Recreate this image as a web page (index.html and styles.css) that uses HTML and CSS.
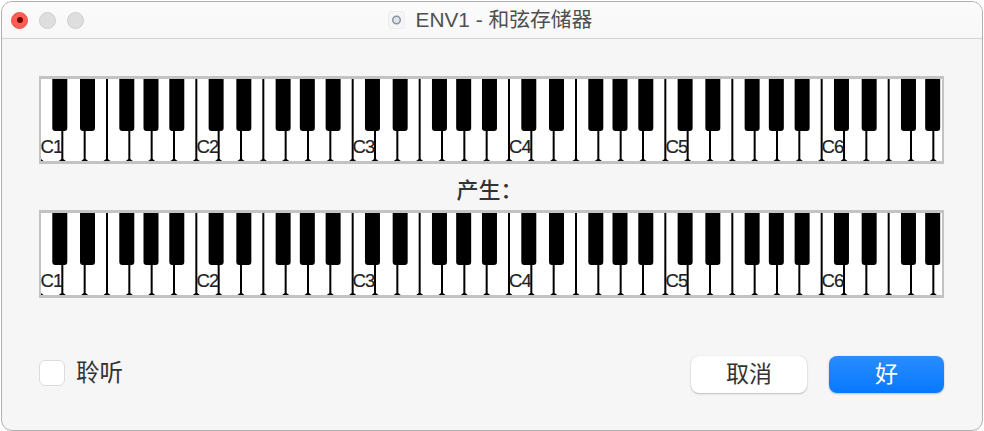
FILE: index.html
```html
<!DOCTYPE html>
<html lang="zh-CN">
<head>
<meta charset="utf-8">
<title>ENV1 - 和弦存储器</title>
<link rel="stylesheet" href="styles.css">
</head>
<body>
<div class="window">
  <header class="titlebar">
    <div class="lights">
      <span class="light light-close"><span class="light-dot"></span></span>
      <span class="light"></span>
      <span class="light"></span>
    </div>
    <div class="title">
      <svg class="doc-icon" viewBox="0 0 17 18" width="17" height="18" aria-hidden="true">
        <rect x="0.5" y="0.5" width="16" height="17" rx="3" fill="#f5f5f5" stroke="#ececec"/>
        <circle cx="8.500" cy="9" r="3.800" fill="#dfe4ea" stroke="#8a95a2" stroke-width="1.500"/>
      </svg>
      <span class="title-text">ENV1 - 和弦存储器</span>
    </div>
  </header>
  <main class="content">
    <svg class="keyboard" viewBox="0 0 905 88" width="905" height="88" role="img">
      <defs>
        <path id="foot" d="M-3.500 85h7L1 83V3h-2v80z"/>
        <path id="black" d="M0 3h15v49a3 3 0 0 1-3 3H3a3 3 0 0 1-3-3z"/>
        <g id="octave">
          <use href="#foot" x="0"/>
          <use href="#foot" x="22.330"/>
          <use href="#foot" x="44.670"/>
          <use href="#foot" x="67"/>
          <use href="#foot" x="89.330"/>
          <use href="#foot" x="111.670"/>
          <use href="#foot" x="134"/>
          <use href="#black" x="12.300"/>
          <use href="#black" x="40"/>
          <use href="#black" x="79.300"/>
          <use href="#black" x="103.500"/>
          <use href="#black" x="129.300"/>
        </g>
      </defs>
      <rect class="key-bed" width="905" height="88"/>
      <g class="keys">
        <use href="#octave" x="1"/><use href="#octave" x="157.330"/><use href="#octave" x="313.670"/>
        <use href="#octave" x="470"/><use href="#octave" x="626.330"/><use href="#octave" x="782.670"/>
      </g>
      <rect class="key-frame" x="0.500" y="1.500" width="904" height="85"/>
      <g class="labels">
        <text x="1.500" y="76.800">C1</text><text x="157.500" y="76.800">C2</text><text x="313.500" y="76.800">C3</text>
        <text x="470" y="76.800">C4</text><text x="626.500" y="76.800">C5</text><text x="782.500" y="76.800">C6</text>
      </g>
    </svg>
    <div class="section-label">产生：</div>
    <svg class="keyboard" viewBox="0 0 905 88" width="905" height="88" role="img">
      <rect class="key-bed" width="905" height="88"/>
      <g class="keys">
        <use href="#octave" x="1"/><use href="#octave" x="157.330"/><use href="#octave" x="313.670"/>
        <use href="#octave" x="470"/><use href="#octave" x="626.330"/><use href="#octave" x="782.670"/>
      </g>
      <rect class="key-frame" x="0.500" y="1.500" width="904" height="85"/>
      <g class="labels">
        <text x="1.500" y="76.800">C1</text><text x="157.500" y="76.800">C2</text><text x="313.500" y="76.800">C3</text>
        <text x="470" y="76.800">C4</text><text x="626.500" y="76.800">C5</text><text x="782.500" y="76.800">C6</text>
      </g>
    </svg>
    <footer class="footer">
      <label class="listen"><span class="checkbox"></span><span>聆听</span></label>
      <div class="buttons">
        <button class="btn" type="button">取消</button>
        <button class="btn btn-primary" type="button">好</button>
      </div>
    </footer>
  </main>
</div>
</body>
</html>
```
FILE: styles.css
```css
* { box-sizing: border-box; }
html, body { margin: 0; height: 100%; background: #fff; }
body { overflow: hidden; font-family: "Liberation Sans", "Noto Sans CJK SC", sans-serif; }
.window {
  width: 982px;
  height: 430px;
  margin: 1px 0 0 1px;
  border: 1px solid #b0b0b0;
  border-radius: 11px;
  background: #f6f6f6;
  overflow: hidden;
  display: flex;
  flex-direction: column;
}
.titlebar {
  height: 37px;
  flex: none;
  display: grid;
  grid-template-columns: 1fr auto 1fr;
  align-items: center;
  background: linear-gradient(#fbfbfb, #f8f8f8);
  border-bottom: 1px solid #d4d4d4;
  padding: 0 0 0 9px;
}
.lights { display: flex; gap: 11px; }
.light {
  width: 17px; height: 17px; border-radius: 50%;
  background: #dedede; border: 1px solid #cecece;
  display: flex; align-items: center; justify-content: center;
}
.light-close { background: #fe5d55; border-color: #ee5048; }
.light-dot { width: 6px; height: 6px; border-radius: 50%; background: #6e0a06; }
.title { display: flex; align-items: center; gap: 11px; padding: 0 13px 1px 0; color: #4f4f4f; }
.title-text { font-size: 20.800px; line-height: 24px; white-space: nowrap; }
.doc-icon { flex: none; }
.content {
  flex: 1;
  padding: 37px 38px 37px 37px;
  display: flex;
  flex-direction: column;
}
.keyboard { display: block; flex: none; }
.key-bed { fill: #fff; }
.key-frame { fill: none; stroke: #c3c3c3; stroke-width: 3; }
.keys { fill: #000; }
.labels { font-family: "Liberation Sans", sans-serif; font-size: 18.500px; letter-spacing: -0.8px; fill: #222; stroke: #222; stroke-width: 0.2; }
.section-label {
  height: 46px;
  font-size: 22px;
  line-height: 54px;
  font-weight: 500;
  color: #333;
  text-align: center;
  padding-right: 4px;
  flex: none;
}
.footer {
  height: 37px;
  flex: none;
  margin-top: auto;
  display: flex;
  align-items: center;
  justify-content: space-between;
}
.listen { display: flex; align-items: center; gap: 11px; font-size: 23.500px; line-height: 30px; color: #333; padding-bottom: 4px; }
.checkbox {
  width: 26px; height: 26px; border-radius: 6px;
  background: #fff; border: 1px solid #dcdcdc;
  box-shadow: inset 0 0 1px rgba(0,0,0,.05);
}
.buttons { display: flex; gap: 22px; }
.btn {
  width: 116px; height: 37px;
  border: 0; border-radius: 8px;
  background: #fff;
  box-shadow: 0 1px 2px rgba(0,0,0,.22), 0 0 1px rgba(0,0,0,.18);
  font: inherit; font-size: 23px; line-height: 37px;
  color: #333;
  padding: 0;
}
.btn-primary {
  width: 115px;
  background: linear-gradient(#2a8cff, #0679ff);
  color: #fff;
}
```
